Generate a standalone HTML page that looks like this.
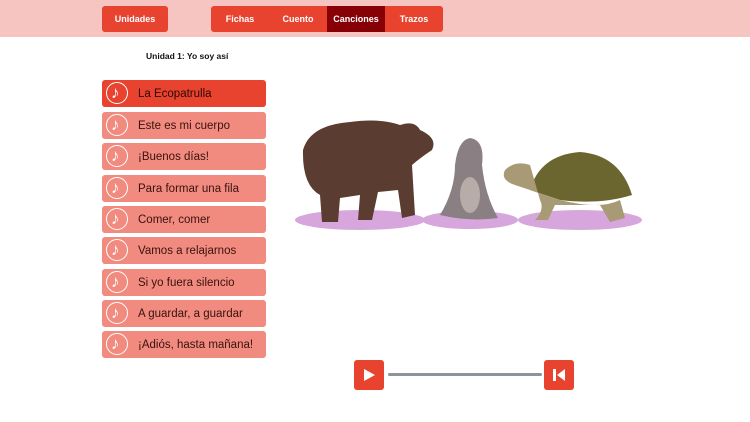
<!DOCTYPE html><html><head><style>
body{margin:0;width:750px;height:422px;background:#fff;font-family:"Liberation Sans",sans-serif;position:relative;overflow:hidden}
.hdr{position:absolute;left:0;top:0;width:750px;height:37px;background:#f6c5c1}
.btn{position:absolute;top:6px;height:26px;background:#e8432f;border-radius:3px;color:#fff;font-size:9px;font-weight:bold;line-height:26px;text-align:center}
.tab{position:absolute;top:0;height:26px;line-height:26px;text-align:center}
.item{position:absolute;left:102px;width:164px;height:27px;background:#f18a7f;border-radius:3px;color:#3a120e;font-size:11.5px;line-height:28px}
.item.a{background:#e8432f;color:#2a0806}
.item span{position:absolute;left:36px}
.ic{position:absolute;left:4px;top:2px;width:20px;height:20px;border:1.5px solid #fff;border-radius:50%}
.ic:after{content:"♪";position:absolute;left:4px;top:-4px;color:#fff;font-size:17px}
</style></head><body>
<div class="hdr"></div>
<div class="btn" style="left:102px;width:66px">Unidades</div>
<div class="btn" style="left:211px;width:232px">
<div class="tab" style="left:0;width:58px">Fichas</div>
<div class="tab" style="left:58px;width:58px">Cuento</div>
<div class="tab" style="left:116px;width:58px;background:#870006">Canciones</div>
<div class="tab" style="left:174px;width:58px">Trazos</div>
</div>
<div style="position:absolute;left:146px;top:51px;font-size:8.5px;font-weight:bold;color:#111">Unidad 1: Yo soy así</div>
<div class="item a" style="top:80px"><div class="ic"></div><span>La Ecopatrulla</span></div>
<div class="item" style="top:112px"><div class="ic"></div><span>Este es mi cuerpo</span></div>
<div class="item" style="top:143px"><div class="ic"></div><span>¡Buenos días!</span></div>
<div class="item" style="top:175px"><div class="ic"></div><span>Para formar una fila</span></div>
<div class="item" style="top:206px"><div class="ic"></div><span>Comer, comer</span></div>
<div class="item" style="top:237px"><div class="ic"></div><span>Vamos a relajarnos</span></div>
<div class="item" style="top:269px"><div class="ic"></div><span>Si yo fuera silencio</span></div>
<div class="item" style="top:300px"><div class="ic"></div><span>A guardar, a guardar</span></div>
<div class="item" style="top:331px"><div class="ic"></div><span>¡Adiós, hasta mañana!</span></div>
<svg style="position:absolute;left:0;top:0" width="750" height="422">
<ellipse cx="360" cy="220" rx="65" ry="10" fill="#d7a6dc"/>
<ellipse cx="470" cy="220" rx="48" ry="9" fill="#d7a6dc"/>
<ellipse cx="580" cy="220" rx="62" ry="10" fill="#d7a6dc"/>
<path d="M303 150 Q310 125 350 122 Q380 118 400 125 Q415 120 420 130 Q438 138 432 150 Q420 158 412 165 L415 215 L402 218 L398 190 L378 192 L372 220 L358 220 L360 195 L340 198 L338 222 L322 222 L320 195 Q302 185 303 150Z" fill="#5a3d30"/>
<path d="M440 215 Q455 190 455 165 Q458 140 470 138 Q485 140 482 165 Q485 195 498 218 Q470 222 440 215Z" fill="#8a7f82"/>
<ellipse cx="470" cy="195" rx="10" ry="18" fill="#b8aca8"/>
<path d="M530 190 Q540 155 580 152 Q620 155 632 195 Q600 205 560 200 Z" fill="#6b6630"/>
<path d="M505 170 Q515 160 530 165 L540 200 Q545 210 535 220 L548 220 L555 205 L600 205 L610 222 L625 218 L620 200 Q600 210 560 200 Q530 190 515 185 Q500 180 505 170Z" fill="#a89a75"/>
</svg>
<div style="position:absolute;left:354px;top:360px;width:30px;height:30px;background:#e8432f;border-radius:3px"><svg width="30" height="30"><path d="M10 9 L21 15 L10 21Z" fill="#fff"/></svg></div>
<div style="position:absolute;left:388px;top:373px;width:154px;height:3px;background:#8c9599;border-radius:2px"></div>
<div style="position:absolute;left:544px;top:360px;width:30px;height:30px;background:#e8432f;border-radius:3px"><svg width="30" height="30"><rect x="9" y="9" width="3" height="12" fill="#fff"/><path d="M21 9 L13 15 L21 21Z" fill="#fff"/></svg></div>
</body></html>
